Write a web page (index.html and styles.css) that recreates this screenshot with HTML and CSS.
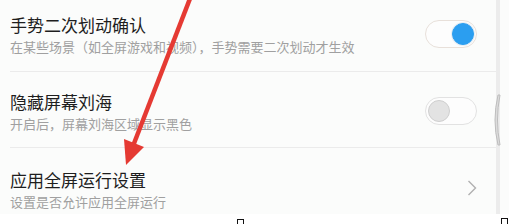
FILE: index.html
```html
<!DOCTYPE html>
<html lang="zh-CN">

<head>
    <meta charset="UTF-8">
    <meta name="viewport" content="width=device-width, initial-scale=1.0">
    <title>全面屏设置</title>
    <link rel="stylesheet" href="styles.css">
</head>

<body>

    <div class="screen">
        <div class="settings-list">
            <div class="setting-item first">
                <div class="setting-text">
                    <div class="setting-title">手势二次划动确认</div>
                    <div class="setting-desc">在某些场景（如全屏游戏和视频），手势需要二次划动才生效</div>
                </div>
                <div class="switch on"><span class="knob"></span></div>
            </div>

            <div class="setting-item">
                <div class="setting-text">
                    <div class="setting-title">隐藏屏幕刘海</div>
                    <div class="setting-desc">开启后，屏幕刘海区域显示黑色</div>
                </div>
                <div class="switch"><span class="knob"></span></div>
            </div>

            <div class="setting-item last">
                <div class="setting-text">
                    <div class="setting-title">应用全屏运行设置</div>
                    <div class="setting-desc">设置是否允许应用全屏运行</div>
                </div>
                <svg class="chevron" width="10" height="16" viewBox="0 0 10 16">
                    <path d="M1.5 1 L8.5 8 L1.5 15" fill="none" stroke="#b0b0b0" stroke-width="1.4"/>
                </svg>
            </div>
        </div>
        <div class="edge"></div>
    </div>

    <!-- scroll hint on the right edge -->
    <svg class="scroll-hint" width="10" height="52" viewBox="0 0 10 52">
        <path d="M7 1 Q1 26 7 51 L9 51 Q4 26 9 1 Z" fill="#dcdcdc" stroke="#bdbdbd" stroke-width="1"/>
    </svg>

    <!-- red annotation arrow -->
    <svg class="annotation" width="509" height="224" viewBox="0 0 509 224">
        <line x1="191" y1="-4" x2="133" y2="146" stroke="#e53a33" stroke-width="4.5"/>
        <polygon points="124,139 144,147 126,165" fill="#e53a33"/>
    </svg>

    <span class="tofu tofu-a"></span>
    <span class="tofu tofu-b"></span>

</body>

</html>
```

FILE: styles.css
```css
body {
    margin: 0;
    padding: 0;
    width: 509px;
    height: 224px;
    overflow: hidden;
    background-color: #fff;
    font-family: "Noto Sans CJK SC", "Noto Sans", sans-serif;
    position: relative;
}

.screen {
    display: flex;
    height: 214px;
    overflow: hidden;
    background-color: #fbfcfb;
}

.settings-list {
    width: 496px;
    margin-top: -3px;
}

.edge {
    width: 4px;
    background-color: #ececec;
}

.setting-item {
    display: flex;
    align-items: center;
    height: 76px;
    margin-left: 10px;
    border-bottom: 1px solid #ebebeb;
    box-sizing: border-box;
    padding-top: 6px;
}

.setting-item.first {
    height: 75px;
    padding-top: 4px;
}

.setting-item.last {
    border-bottom: none;
    padding-top: 10px;
}

.setting-text {
    flex: 1;
}

.setting-title {
    font-size: 17px;
    line-height: 22px;
    color: #1e1e1e;
}

.setting-desc {
    font-size: 13px;
    line-height: 22px;
    color: #a0a0a0;
}

.switch {
    width: 46px;
    height: 26px;
    margin-right: 19px;
    border: 1px solid #e2e2e2;
    border-radius: 14px;
    background-color: #fdfdfd;
    display: flex;
    align-items: center;
    padding: 0 2px;
    box-sizing: content-box;
    margin-top: -4px;
}

.switch .knob {
    width: 20px;
    height: 20px;
    border-radius: 50%;
    background-color: #e3e3e3;
    border: 1px solid #cfcfcf;
}

.switch.on {
    justify-content: flex-end;
    border-color: #e8e0da;
}

.switch.on .knob {
    background-color: #2b9ef0;
    border-color: #2b9ef0;
    box-shadow: 0 0 0 1px #e6eef4;
}

.chevron {
    margin-right: 19px;
    margin-top: -6px;
}

.scroll-hint {
    position: absolute;
    left: 491px;
    top: 94px;
}

.annotation {
    position: absolute;
    left: 0;
    top: 0;
}

.tofu {
    position: absolute;
    width: 5px;
    height: 6px;
    border: 1px solid #111;
    border-bottom: none;
}

.tofu-a {
    left: 237px;
    top: 219px;
}

.tofu-b {
    left: 501px;
    top: 218px;
}
```
